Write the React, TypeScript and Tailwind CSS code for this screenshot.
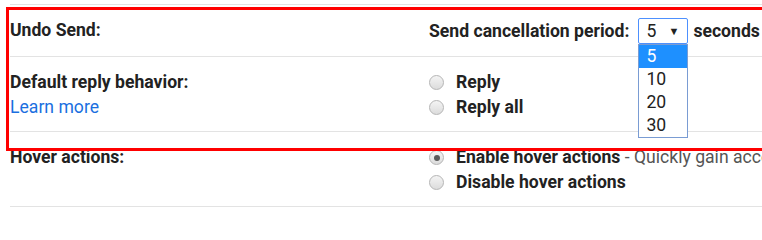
const OPTIONS = ['5', '10', '20', '30'];

function Radio({ checked = false }: { checked?: boolean }) {
  return (
    <span className="w-[15px] h-[15px] shrink-0 rounded-full border border-[#b5b5b5] bg-gradient-to-b from-[#f4f4f4] to-[#dcdcdc] flex items-center justify-center">
      {checked && <span className="w-[6px] h-[6px] rounded-full bg-[#5a5a5a]" />}
    </span>
  );
}

export default function App() {
  return (
    <div
      className="relative w-[762px] h-[216px] overflow-hidden bg-white text-[#222] text-[17.6px] leading-[25px]"
      style={{ fontFamily: 'Roboto, Arial, sans-serif' }}
    >
      <div className="pt-[4px] pl-[10px] w-[900px]">
        {/* ── Undo Send ── */}
        <div className="flex border-t border-[#e3e3e3] pt-[13px] pb-[12px]">
          <div className="w-[419px] shrink-0 font-bold">Undo Send:</div>
          <div className="flex items-center font-bold whitespace-nowrap">
            <span>Send cancellation period:</span>
            <div className="relative ml-[9px] mr-[5px]">
              <div className="w-[50px] h-[26px] border border-[#4d90fe] rounded-[2px] flex items-center justify-between pl-[7px] pr-[8px] font-normal">
                <span>5</span>
                <span className="text-[11px] leading-none">▼</span>
              </div>
              {/* open dropdown */}
              <ul className="absolute left-0 top-[26px] w-[50px] border border-[#7a9cd3] bg-white font-normal z-10">
                {OPTIONS.map((o, i) => (
                  <li
                    key={o}
                    className={
                      i === 0
                        ? 'h-[23px] leading-[23px] pl-[7px] bg-[#1e90ff] text-white'
                        : 'h-[23px] leading-[23px] pl-[7px]'
                    }
                  >
                    {o}
                  </li>
                ))}
              </ul>
            </div>
            <span>seconds</span>
          </div>
        </div>

        {/* ── Default reply ── */}
        <div className="flex border-t border-[#e3e3e3] pt-[13px] pb-[11px]">
          <div className="w-[419px] shrink-0">
            <div className="font-bold">Default reply behavior:</div>
            <a className="text-[#1a6fe0]">Learn more</a>
          </div>
          <div className="font-bold">
            <label className="flex items-center gap-[12px]">
              <Radio />
              Reply
            </label>
            <label className="flex items-center gap-[12px]">
              <Radio />
              Reply all
            </label>
          </div>
        </div>

        {/* ── Hover actions ── */}
        <div className="flex border-t border-b border-[#e3e3e3] pt-[13px] pb-[11px]">
          <div className="w-[419px] shrink-0 font-bold">Hover actions:</div>
          <div className="font-bold whitespace-nowrap">
            <label className="flex items-center gap-[12px]">
              <Radio checked />
              <span>
                Enable hover actions
                <span className="font-normal text-[#555]"> - Quickly gain access to archive</span>
              </span>
            </label>
            <label className="flex items-center gap-[12px]">
              <Radio />
              Disable hover actions
            </label>
          </div>
        </div>
      </div>

      {/* annotation box */}
      <div className="absolute left-[6px] top-[7px] w-[800px] h-[144px] border-[3px] border-[#ff0000] pointer-events-none" />
    </div>
  );
}
